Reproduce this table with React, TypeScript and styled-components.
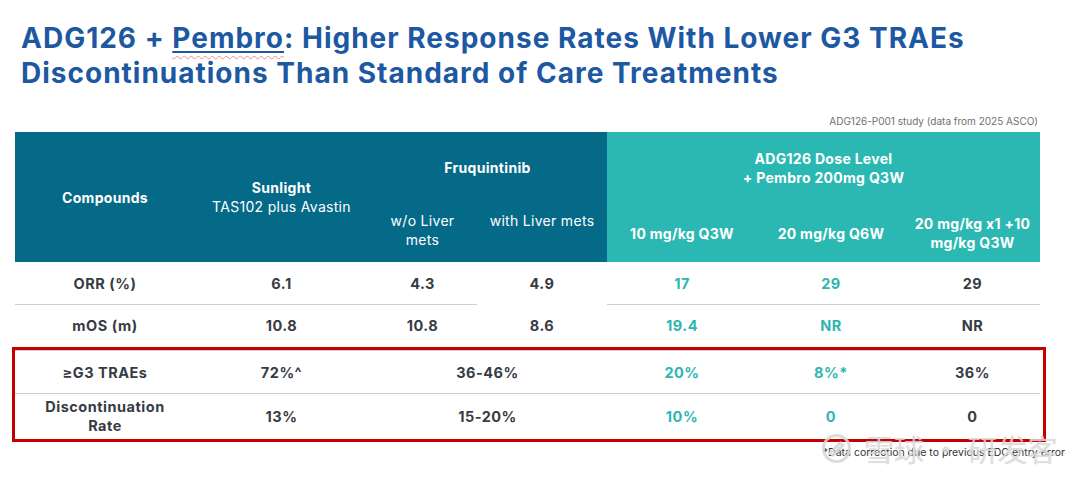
import React from "react";
import styled, { createGlobalStyle } from "styled-components";

const GlobalStyle = createGlobalStyle`
  html, body {
    margin: 0;
    padding: 0;
    background: #ffffff;
  }
  body {
    font-family: Inter, "Liberation Sans", Arial, sans-serif;
  }
`;

const Page = styled.div`
  position: relative;
  width: 1080px;
  height: 489px;
  overflow: hidden;
  background: #ffffff;
`;

const Title = styled.h1`
  margin: 0;
  padding: 21px 0 0 21px;
  font-size: 28px;
  line-height: 35px;
  font-weight: 700;
  color: #1d58a3;
  letter-spacing: 1px;
  white-space: nowrap;
`;

const Marked = styled.span`
  text-decoration: underline wavy #ef8a8a 1px;
  text-underline-offset: 7px;
`;

const Linked = styled.span`
  text-decoration: underline #1d58a3 2px;
  text-underline-offset: 3px;
`;

const Source = styled.div`
  text-align: right;
  padding: 23px 42px 0 0;
  font-size: 10px;
  line-height: 14px;
  color: #707070;
`;

const Table = styled.div`
  margin: 4px 40px 0 15px;
  width: 1025px;
`;

const COLS = "180px 173px 109px 130px 150px 148px 135px";

const Header = styled.div`
  display: grid;
  grid-template-columns: ${COLS};
  grid-template-rows: 70px 60px;
  color: #ffffff;
  font-size: 14px;
  letter-spacing: 0.3px;
`;

const HeadCell = styled.div<{
  $teal?: boolean;
  $col: string;
  $row: string;
  $top?: number;
  $bold?: boolean;
}>`
  grid-column: ${(p) => p.$col};
  grid-row: ${(p) => p.$row};
  background: ${(p) => (p.$teal ? "#2cb8b2" : "#056a88")};
  display: flex;
  flex-direction: column;
  align-items: center;
  justify-content: ${(p) => (p.$top !== undefined ? "flex-start" : "center")};
  padding-top: ${(p) => p.$top ?? 0}px;
  text-align: center;
  line-height: 19px;
  font-weight: ${(p) => (p.$bold ? 700 : 400)};
  box-sizing: border-box;
`;

const Strong = styled.span`
  font-weight: 700;
`;

const Body = styled.div`
  display: grid;
  grid-template-columns: ${COLS};
`;

const RedBox = styled.div`
  margin: 0 -6px 0 -3px;
  border: 3px solid #c40000;
  display: grid;
  grid-template-columns: ${COLS};
`;

const Cell = styled.div<{ $h: number; $teal?: boolean; $line?: boolean; $topLine?: boolean; $span?: boolean }>`
  grid-column: ${(p) => (p.$span ? "span 2" : "auto")};
  height: ${(p) => p.$h}px;
  display: flex;
  align-items: center;
  justify-content: center;
  text-align: center;
  font-size: 14.5px;
  line-height: 19px;
  font-weight: 700;
  letter-spacing: 0.5px;
  color: ${(p) => (p.$teal ? "#2db6b0" : "#363b44")};
  box-sizing: border-box;
  border-bottom: ${(p) => (p.$line ? "1.5px solid #cfcfcf" : "1.5px solid transparent")};
  border-top: ${(p) => (p.$topLine ? "1px solid #cfcfcf" : "none")};
`;

const Footnote = styled.div`
  display: flex;
  justify-content: flex-end;
  padding: 4px 15px 0 0;
  font-size: 10.5px;
  line-height: 14px;
  color: #333333;
`;

const Watermark = styled.div`
  position: absolute;
  left: 821px;
  top: 426px;
  display: flex;
  align-items: center;
  gap: 12px;
  white-space: nowrap;
  font-family: "Noto Sans CJK SC", sans-serif;
  font-size: 30px;
  line-height: 44px;
  color: rgba(222, 222, 222, 0.8);
  text-shadow: 0 0 1px rgba(160, 160, 160, 0.35);
  pointer-events: none;
`;

type Row = {
  label: React.ReactNode;
  values: { v: string; teal?: boolean }[];
};

const topRows: Row[] = [
  {
    label: "ORR (%)",
    values: [{ v: "6.1" }, { v: "4.3" }, { v: "4.9" }, { v: "17", teal: true }, { v: "29", teal: true }, { v: "29" }],
  },
  {
    label: "mOS (m)",
    values: [{ v: "10.8" }, { v: "10.8" }, { v: "8.6" }, { v: "19.4", teal: true }, { v: "NR", teal: true }, { v: "NR" }],
  },
];

function SnowballLogo() {
  return (
    <svg width="31" height="31" viewBox="0 0 32 32" fill="none">
      <circle cx="16" cy="16" r="13.5" stroke="rgba(215,215,215,0.9)" strokeWidth="3" />
      <path d="M9 21 L20 10 M12 23 L23 12" stroke="rgba(215,215,215,0.9)" strokeWidth="3" strokeLinecap="round" />
    </svg>
  );
}

export default function App() {
  return (
    <Page>
      <GlobalStyle />
      <Title>
        ADG126 + <Marked><Linked>Pembro</Linked></Marked>: Higher Response Rates With Lower G3 TRAEs
        <br />
        Discontinuations Than Standard of Care Treatments
      </Title>
      <Source>ADG126-P001 study (data from 2025 ASCO)</Source>

      <Table>
        <Header>
          <HeadCell $col="1" $row="1 / 3" $bold>
            Compounds
          </HeadCell>
          <HeadCell $col="2" $row="1 / 3">
            <Strong>Sunlight</Strong>
            TAS102 plus Avastin
          </HeadCell>
          <HeadCell $col="3 / 5" $row="1" $bold>
            Fruquintinib
          </HeadCell>
          <HeadCell $col="3" $row="2" $top={9}>
            w/o Liver
            <br />
            mets
          </HeadCell>
          <HeadCell $col="4" $row="2" $top={9}>
            with Liver mets
          </HeadCell>
          <HeadCell $teal $col="5 / 8" $row="1" $bold $top={17}>
            ADG126 Dose Level
            <br />+ Pembro 200mg Q3W
          </HeadCell>
          <HeadCell $teal $col="5" $row="2" $bold $top={22}>
            10 mg/kg Q3W
          </HeadCell>
          <HeadCell $teal $col="6" $row="2" $bold $top={22}>
            20 mg/kg Q6W
          </HeadCell>
          <HeadCell $teal $col="7" $row="2" $bold $top={12}>
            20 mg/kg x1 +10
            <br />
            mg/kg Q3W
          </HeadCell>
        </Header>

        <Body>
          {topRows.map((row, r) => (
            <React.Fragment key={r}>
              <Cell $h={r === 0 ? 43 : 42} $line={r === 0}>{row.label}</Cell>
              {row.values.map((c, i) => (
                <Cell key={i} $h={r === 0 ? 43 : 42} $teal={c.teal} $line={r === 0 && i !== 2}>
                  {c.v}
                </Cell>
              ))}
            </React.Fragment>
          ))}
        </Body>

        <RedBox>
          <Cell $h={44} $line $topLine>≥G3 TRAEs</Cell>
          <Cell $h={44} $line $topLine>72%^</Cell>
          <Cell $h={44} $line $topLine $span>36-46%</Cell>
          <Cell $h={44} $line $topLine $teal>20%</Cell>
          <Cell $h={44} $line $topLine $teal>8%*</Cell>
          <Cell $h={44} $line $topLine>36%</Cell>

          <Cell $h={45}>
            Discontinuation
            <br />
            Rate
          </Cell>
          <Cell $h={45}>13%</Cell>
          <Cell $h={45} $span>15-20%</Cell>
          <Cell $h={45} $teal>10%</Cell>
          <Cell $h={45} $teal>0</Cell>
          <Cell $h={45}>0</Cell>
        </RedBox>
      </Table>

      <Footnote>*Data correction due to previous EDC entry error</Footnote>

      <Watermark>
        <SnowballLogo />
        <span>雪球 · 研发客</span>
      </Watermark>
    </Page>
  );
}
